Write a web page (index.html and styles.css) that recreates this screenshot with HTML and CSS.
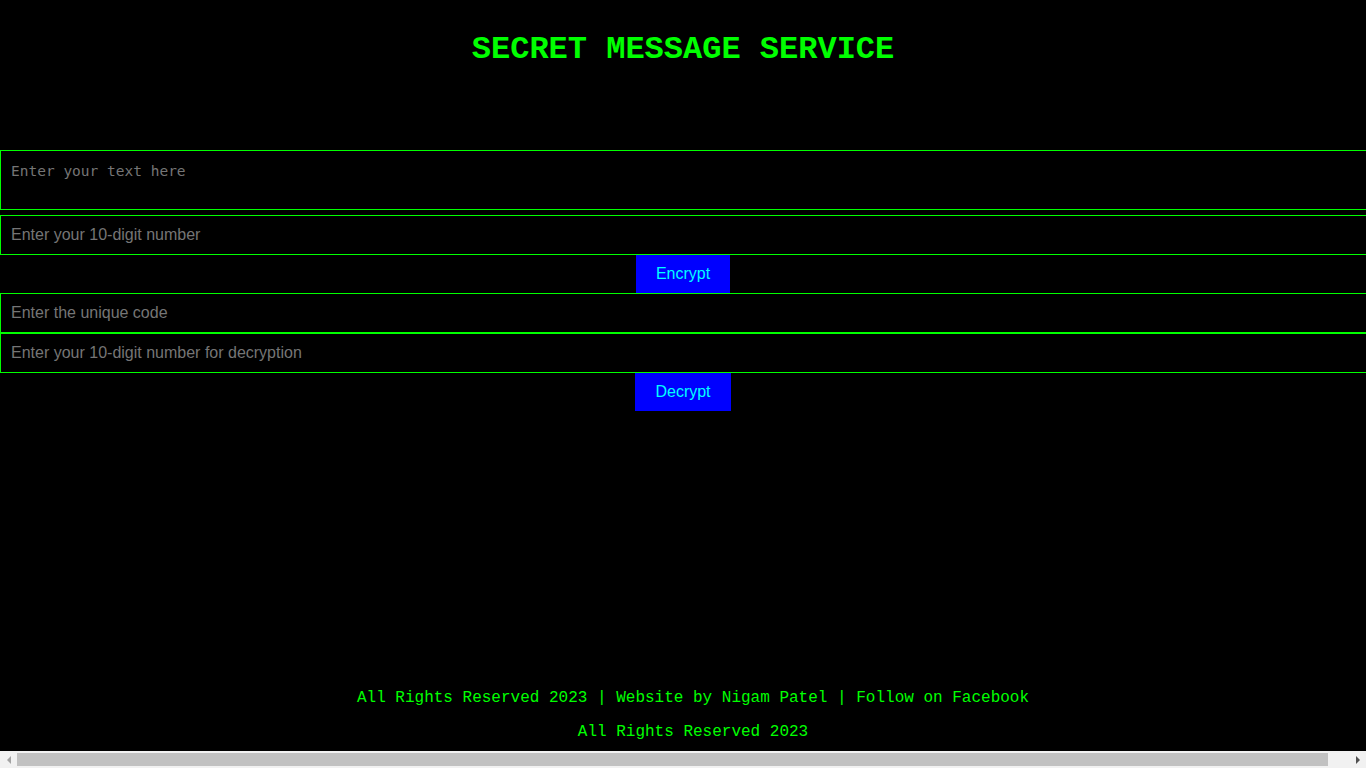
FILE: index.html
```html
<!DOCTYPE html>
<html lang="en">
<head>
<meta charset="utf-8">
<title>Secret Message Service</title>
<link rel="stylesheet" href="styles.css">
</head>
<body>
<header class="site-header">
  <h1 class="title">SECRET MESSAGE SERVICE</h1>
</header>
<main class="main">
  <textarea class="text-input" placeholder="Enter your text here"></textarea>
  <input class="field" type="text" placeholder="Enter your 10-digit number">
  <div class="actions"><button class="btn" type="button">Encrypt</button></div>
  <input class="field" type="text" placeholder="Enter the unique code">
  <input class="field" type="text" placeholder="Enter your 10-digit number for decryption">
  <div class="actions"><button class="btn" type="button">Decrypt</button></div>
</main>
<footer class="site-footer">
  <p class="footer-line">All Rights Reserved 2023 | Website by Nigam Patel | Follow on Facebook</p>
  <p class="footer-line last">All Rights Reserved 2023</p>
</footer>
<div class="hscroll" aria-hidden="true">
  <span class="hscroll-arrow left"></span>
  <span class="hscroll-track"><span class="hscroll-thumb"></span></span>
  <span class="hscroll-arrow right"></span>
</div>
</body>
</html>
```
FILE: styles.css
```css
html {
  height: 100%;
}
body {
  margin: 0;
  min-height: 100%;
  display: flex;
  flex-direction: column;
  background: #000;
  color: #00ff00;
  font-family: "Courier New", "Liberation Mono", monospace;
  overflow-x: hidden;
}
.site-header {
  padding: 10px;
  text-align: center;
}
.title {
  margin: 21.44px 0;
  font-size: 32px;
  font-weight: bold;
  color: #00ff00;
}
.main {
  padding-top: 50px;
  display: flex;
  flex-direction: column;
}
.text-input {
  display: block;
  box-sizing: content-box;
  width: 100%;
  height: 38px;
  margin: 0 0 5px 0;
  padding: 12px 10px 8px 10px;
  border: 1px solid #00ff00;
  background: #000;
  color: #00ff00;
  font-family: "DejaVu Sans Mono", "Liberation Mono", monospace;
  font-size: 14.5px;
  line-height: 17px;
  resize: none;
  outline: none;
}
.field {
  display: block;
  box-sizing: content-box;
  width: 100%;
  height: 18px;
  margin: 0;
  padding: 10px;
  border: 1px solid #00ff00;
  background: #000;
  color: #00ff00;
  font-family: "Liberation Sans", Arial, sans-serif;
  font-size: 16px;
  line-height: 18px;
  outline: none;
}
.text-input::placeholder,
.field::placeholder {
  color: #757575;
}
.actions {
  display: flex;
  justify-content: center;
  width: 100%;
}
.btn {
  margin: 0;
  padding: 10px 20px;
  border: none;
  background: #0000ff;
  color: #00ffff;
  font-family: "Liberation Sans", Arial, sans-serif;
  font-size: 16px;
  line-height: 18px;
  cursor: pointer;
}
.site-footer {
  margin-top: auto;
  width: 100%;
  padding: 10px;
  text-align: center;
}
.footer-line {
  margin: 0 0 16px 0;
  font-size: 16px;
  color: #00ff00;
}
.footer-line.last {
  margin-bottom: 0;
}
.hscroll {
  flex: none;
  display: flex;
  align-items: stretch;
  height: 17px;
  background: #f1f1f1;
}
.hscroll-arrow {
  flex: none;
  width: 17px;
  display: flex;
  align-items: center;
  justify-content: center;
}
.hscroll-arrow::before {
  content: "";
  width: 0;
  height: 0;
  border-top: 4px solid transparent;
  border-bottom: 4px solid transparent;
}
.hscroll-arrow.left::before {
  border-right: 4px solid #a3a3a3;
}
.hscroll-arrow.right::before {
  border-left: 4px solid #505050;
}
.hscroll-track {
  flex: 1;
  display: flex;
  padding: 2px 0;
}
.hscroll-thumb {
  width: 1311px;
  background: #c1c1c1;
}
```
